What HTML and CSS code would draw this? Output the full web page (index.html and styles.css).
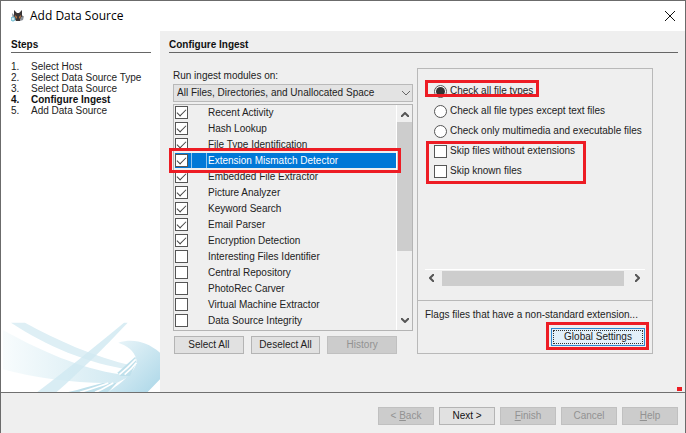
FILE: index.html
```html
<!DOCTYPE html>
<html lang="en">
<head>
    <meta charset="UTF-8">
    <meta name="viewport" content="width=device-width, initial-scale=1.0">
    <title>Add Data Source</title>
    <link rel="stylesheet" href="styles.css">
</head>
<body>
    <header class="titlebar">
        <svg class="logo" viewBox="0 0 13 12" aria-hidden="true">
            <path d="M3 0 L6 3 H8 L11 0 L11 5 L12 7 L10 8 L9 11 H5 L3 8 Z" fill="#3a3536"/>
            <path d="M1 3 L3 5 L4 9 L2 11 Z M10 7 L13 6 L12 10 L9 11 Z" fill="#8b8f96"/>
            <path d="M4 5 L6 7 L5 9 Z M10 5 L8 7 L9 9 Z" fill="#e08a45"/>
            <circle cx="2" cy="9" r="2" fill="#d5eff6" stroke="#62b5cc"/>
        </svg>
        <h1>Add Data Source</h1>
        <button class="close" aria-label="Close">
            <svg viewBox="0 0 10 10"><path d="M0 0 L10 10 M10 0 L0 10" stroke="#111" fill="none"/></svg>
        </button>
    </header>

    <div class="wizard">
        <aside class="steps">
            <h2>Steps</h2>
            <ol>
                <li><span>1.</span>Select Host</li>
                <li><span>2.</span>Select Data Source Type</li>
                <li><span>3.</span>Select Data Source</li>
                <li class="current"><span>4.</span>Configure Ingest</li>
                <li><span>5.</span>Add Data Source</li>
            </ol>
            <svg class="waves" viewBox="3 276 477 210" preserveAspectRatio="none" aria-hidden="true">
                <defs>
                    <linearGradient id="band" x1="0" x2="1" y1="0" y2="0">
                        <stop offset="0" stop-color="#f8fcfd"/>
                        <stop offset="1" stop-color="#cfe8f1"/>
                    </linearGradient>
                    <linearGradient id="swirl" x1="0" x2="1" y1="0" y2="1">
                        <stop offset="0" stop-color="#eef7fa"/>
                        <stop offset="1" stop-color="#acd7e8"/>
                    </linearGradient>
                </defs>
                <path d="M9 300 C100 350 210 405 340 430 L390 438 L350 459 C230 462 110 445 9 418 Z" fill="url(#band)"/>
                <path d="M33 278 H75 C170 330 280 380 400 408 L396 420 C260 400 140 348 33 278 Z" fill="#deeff5"/>
                <path d="M372 278 H383 C320 345 240 425 170 486 H112 C205 415 290 345 372 278 Z" fill="#cfe8f1" opacity=".8"/>
                <path d="M355 338 C400 325 440 335 480 368 V448 L443 486 H325 C360 462 416 420 409 388 C403 362 380 346 355 338 Z" fill="url(#swirl)"/>
                <path d="M406 380 L352 428 L362 438 H390 L409 398 Z" fill="#bfe0eb"/>
                <path d="M308 459 C275 468 240 478 205 486 H325 L350 459 Z" fill="#bfe0eb"/>
                <path d="M358 434 C375 420 393 403 407 388 M374 434 C386 424 400 410 409 398 M240 487 C270 478 300 469 325 459 M285 487 C305 480 320 470 340 459" fill="none" stroke="#fff" stroke-width="5"/>
            </svg>
        </aside>

        <main>
            <h2>Configure Ingest</h2>
            <div class="columns">
                <section class="modules">
                    <label for="scope">Run ingest modules on:</label>
                    <div class="combo">
                        <select id="scope">
                            <option>All Files, Directories, and Unallocated Space</option>
                        </select>
                        <svg viewBox="0 0 8 5"><path d="M0 0 L4 4 L8 0" fill="none" stroke="#666"/></svg>
                    </div>
                    <div class="list-wrap">
                        <div class="list">
                            <ul>
                                <li><label><input type="checkbox" checked>Recent Activity</label></li>
                                <li><label><input type="checkbox" checked>Hash Lookup</label></li>
                                <li><label><input type="checkbox" checked>File Type Identification</label></li>
                                <li class="selected"><label><input type="checkbox" checked>Extension Mismatch Detector</label></li>
                                <li><label><input type="checkbox" checked>Embedded File Extractor</label></li>
                                <li><label><input type="checkbox" checked>Picture Analyzer</label></li>
                                <li><label><input type="checkbox" checked>Keyword Search</label></li>
                                <li><label><input type="checkbox" checked>Email Parser</label></li>
                                <li><label><input type="checkbox" checked>Encryption Detection</label></li>
                                <li><label><input type="checkbox">Interesting Files Identifier</label></li>
                                <li><label><input type="checkbox">Central Repository</label></li>
                                <li><label><input type="checkbox">PhotoRec Carver</label></li>
                                <li><label><input type="checkbox">Virtual Machine Extractor</label></li>
                                <li><label><input type="checkbox">Data Source Integrity</label></li>
                                <li><label><input type="checkbox" aria-label="More modules"></label></li>
                            </ul>
                            <div class="scroll-v">
                                <svg viewBox="0 0 8 5"><path d="M0 5 L4 1 L8 5" fill="none" stroke="#555" stroke-width="2"/></svg>
                                <div class="thumb"></div>
                                <svg viewBox="0 0 8 5"><path d="M0 0 L4 4 L8 0" fill="none" stroke="#555" stroke-width="2"/></svg>
                            </div>
                        </div>
                        <div class="mark mark-row"></div>
                    </div>
                    <div class="buttons">
                        <button>Select All</button>
                        <button>Deselect All</button>
                        <button disabled>History</button>
                    </div>
                </section>

                <section class="settings">
                    <div class="options">
                        <label><input type="radio" name="types" checked>Check all file types</label>
                        <label><input type="radio" name="types">Check all file types except text files</label>
                        <label><input type="radio" name="types">Check only multimedia and executable files</label>
                        <label><input type="checkbox">Skip files without extensions</label>
                        <label><input type="checkbox">Skip known files</label>
                        <div class="mark mark-radio"></div>
                        <div class="mark mark-skip"></div>
                    </div>
                    <div class="scroll-h">
                        <svg viewBox="0 0 5 8"><path d="M5 0 L1 4 L5 8" fill="none" stroke="#555" stroke-width="2"/></svg>
                        <div class="thumb"></div>
                        <svg viewBox="0 0 5 8"><path d="M0 0 L4 4 L0 8" fill="none" stroke="#555" stroke-width="2"/></svg>
                    </div>
                    <div class="about">
                        <p>Flags files that have a non-standard extension...</p>
                        <div class="global">
                            <button class="focused">Global Settings</button>
                            <div class="mark mark-global"></div>
                        </div>
                    </div>
                </section>
            </div>
            <div class="dot"></div>
        </main>
    </div>

    <footer>
        <button disabled>&lt; <u>B</u>ack</button>
        <button class="next">Next &gt;</button>
        <button disabled><u>F</u>inish</button>
        <button disabled>Cancel</button>
        <button disabled><u>H</u>elp</button>
    </footer>
</body>
</html>
```
FILE: styles.css
```css
* {
    box-sizing: border-box;
}
body {
    display: flex;
    flex-direction: column;
    min-height: 100vh;
    margin: 0;
    border: 1px solid #6b6b6b;
    border-bottom: 0;
    background-color: #efefef;
    color: #222;
    font: 10px/16px "Liberation Sans", Arial, sans-serif;
}
h1, h2, p, ul, ol {
    margin: 0;
    padding: 0;
    list-style: none;
}
button, select {
    font: inherit;
    color: inherit;
}

/* title bar */
.titlebar {
    display: flex;
    align-items: center;
    height: 30px;
    padding: 0 10px;
    background-color: #fff;
}
.logo {
    width: 13px;
    height: 12px;
}
.titlebar h1 {
    flex: 1;
    margin-left: 6px;
    color: #000;
    font: 12px/18px "Open Sans", "Noto Sans", sans-serif;
}
.close {
    display: flex;
    padding: 0;
    border: 0;
    background: none;
}
.close svg {
    width: 10px;
    height: 10px;
}

/* steps */
.wizard {
    display: flex;
    flex: 1;
    border-bottom: 1px solid #707070;
}
.steps {
    display: flex;
    flex-direction: column;
    width: 159px;
    background-color: #fff;
}
h2 {
    padding-top: 7px;
    border-bottom: 1px solid #666;
    color: #111;
    font-size: 10px;
    line-height: 14px;
}
.steps h2 {
    margin: 0 9px 8px 10px;
}
.steps ol {
    flex: 1;
    padding-left: 10px;
    line-height: 11px;
}
.steps li {
    display: flex;
}
.steps li span {
    width: 20px;
}
.current {
    color: #111;
    font-weight: bold;
}
.waves {
    display: block;
    width: 100%;
    height: 70px;
}

/* main area */
main {
    position: relative;
    display: flex;
    flex: 1;
    flex-direction: column;
    min-width: 0;
    padding: 0 7px 38px 9px;
}
.columns {
    display: grid;
    flex: 1;
    grid-template-columns: minmax(0, 240fr) minmax(0, 236fr);
    gap: 4px;
    margin: 15px 25px 0 4px;
}
.modules {
    display: flex;
    flex-direction: column;
}
.combo {
    position: relative;
    margin-bottom: 2px;
}
.combo select {
    display: block;
    width: 100%;
    height: 18px;
    padding: 0 3px;
    border: 1px solid #b9b9b9;
    border-radius: 0;
    background-color: #e3e3e3;
    appearance: none;
}
.combo svg {
    position: absolute;
    top: 7px;
    right: 3px;
    width: 8px;
    height: 5px;
}
.list-wrap {
    position: relative;
    flex: 1;
}
.list {
    display: flex;
    height: 227px;
    border: 1px solid #b4b4b4;
    overflow: hidden;
}
.list ul {
    flex: 1;
    padding-left: 1px;
}
.list li {
    height: 16px;
    padding-bottom: 1px;
}
.list label {
    display: flex;
    align-items: center;
    height: 15px;
}
.list input {
    margin-right: 20px;
}
.selected label {
    background: linear-gradient(90deg, #0078d7 16px, #8fc4ee 16px 17px, #0078d7 17px 31px, #8fc4ee 31px 32px, #0078d7 32px);
    color: #fff;
}
.scroll-v {
    display: flex;
    flex-direction: column;
    align-items: center;
    width: 16px;
    padding: 7px 0;
    border-left: 1px solid #fff;
}
.scroll-v svg {
    width: 8px;
    height: 5px;
}
.scroll-v .thumb {
    width: 15px;
    height: 129px;
    margin: 5px 0 auto;
}
.thumb {
    background-color: #cdcdcd;
}

/* inputs */
input {
    flex: none;
    display: grid;
    place-items: center;
    width: 13px;
    height: 13px;
    margin: 0;
    border: 1px solid #555;
    background-color: #fff;
    appearance: none;
}
input[type="checkbox"]:checked::before {
    content: "";
    width: 8px;
    height: 4px;
    border: solid #444;
    border-width: 0 0 1px 1px;
    transform: translateY(-1px) rotate(-45deg);
}
input[type="radio"] {
    border-radius: 50%;
}
input[type="radio"]:checked::before {
    content: "";
    width: 9px;
    height: 9px;
    border-radius: 50%;
    background-color: #333;
}

/* buttons */
.buttons {
    display: grid;
    grid-template-columns: repeat(3, minmax(0, 1fr));
    gap: 7px;
    margin: 4px 16px 0 1px;
}
.buttons button, footer button, .focused {
    height: 18px;
    padding: 0;
    border: 1px solid #b4b4b4;
    background-color: #e1e1e1;
    line-height: 14px;
    white-space: nowrap;
}
.buttons button:disabled, footer button:disabled {
    border-color: #c0c0c0;
    background-color: #cccccc;
    color: #929292;
}

/* module settings */
.settings {
    display: flex;
    flex-direction: column;
    border: 1px solid #b9b9b9;
}
.options {
    position: relative;
    flex: 1;
    padding: 12px 0 0 16px;
}
.options label {
    display: flex;
    align-items: center;
    gap: 3px;
    height: 20px;
    white-space: nowrap;
}
.scroll-h {
    display: flex;
    align-items: center;
    justify-content: space-between;
    height: 17px;
    margin: 0 7px 14px;
    padding: 0 5px 0 4px;
    border-top: 1px solid #fff;
}
.scroll-h svg {
    width: 5px;
    height: 8px;
}
.scroll-h .thumb {
    flex: 1;
    height: 15px;
    margin: 0 11px 0 8px;
}
.about {
    padding: 6px 7px 7px;
    border-top: 1px solid #b9b9b9;
    white-space: nowrap;
}
.global {
    position: relative;
    width: 94px;
    margin: 5px 0 0 auto;
}
.focused {
    display: block;
    width: 100%;
    border-color: #2c86d0;
    background-color: #e3f0fa;
    outline: 1px dotted #333;
    outline-offset: -3px;
}

/* red highlights */
.mark {
    position: absolute;
    border: 3px solid #ed1c24;
    pointer-events: none;
}
.mark-row {
    top: 44px;
    right: 12px;
    left: -4px;
    height: 25px;
}
.mark-radio {
    top: 11px;
    left: 7px;
    width: 114px;
    height: 17px;
}
.mark-skip {
    top: 72px;
    left: 8px;
    width: 160px;
    height: 43px;
}
.mark-global {
    inset: -6px -4px -4px -5px;
}
.dot {
    position: absolute;
    right: 3px;
    bottom: 1px;
    width: 5px;
    height: 4px;
    background-color: #ed1c24;
}

/* footer */
footer {
    display: flex;
    justify-content: flex-end;
    gap: 5px;
    padding: 14px 7px 8px;
}
footer button {
    width: 56px;
}
.next {
    color: #111;
}
```
